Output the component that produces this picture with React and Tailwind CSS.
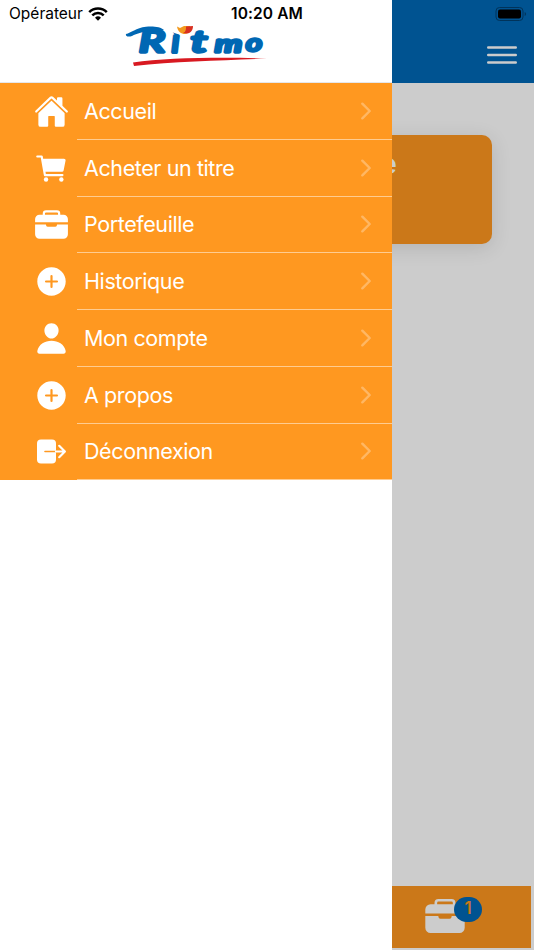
import {
  IoHome,
  IoCart,
  IoBriefcase,
  IoAddCircle,
  IoPerson,
  IoChevronForward,
} from "react-icons/io5";

function LogoutIcon({ className }) {
  return (
    <svg viewBox="0 0 35 35" className={className}>
      <rect x="3" y="5.500" width="19" height="24" rx="4" fill="#fff" />
      <path d="M11 17.500h11" stroke="#ff9820" strokeWidth="1.600" strokeLinecap="round" />
      <path
        d="M22 17.500h8.500M25.200 11.800l5.700 5.700-5.700 5.700"
        fill="none"
        stroke="#fff"
        strokeWidth="2.200"
        strokeLinecap="round"
        strokeLinejoin="round"
      />
    </svg>
  );
}

const menuItems = [
  { label: "Accueil", icon: IoHome },
  { label: "Acheter un titre", icon: IoCart },
  { label: "Portefeuille", icon: IoBriefcase },
  { label: "Historique", icon: IoAddCircle },
  { label: "Mon compte", icon: IoPerson },
  { label: "A propos", icon: IoAddCircle },
  { label: "Déconnexion", icon: LogoutIcon },
];

function Logo() {
  return (
    <svg width="160" height="66" viewBox="0 -18 160 66" className="block">
      <text
        fill="#0067b3"
        stroke="#0067b3"
        strokeWidth="3.400"
        strokeLinejoin="round"
        strokeLinecap="round"
        fontFamily="Lato, sans-serif"
        fontStyle="italic"
        fontWeight="400"
      >
        <tspan x="23" y="25.500" fontSize="30" textLength="26" lengthAdjust="spacingAndGlyphs">R</tspan>
        <tspan x="56" y="25.500" fontSize="31" strokeWidth="4.200">i</tspan>
        <tspan x="75" y="25.500" fontSize="29" textLength="16" lengthAdjust="spacingAndGlyphs">t</tspan>
        <tspan x="99" y="25.500" fontSize="24" textLength="27" lengthAdjust="spacingAndGlyphs">m</tspan>
        <tspan x="130" y="25" fontSize="24" textLength="16" lengthAdjust="spacingAndGlyphs">o</tspan>
      </text>
      <path d="M10 8C15 7 20 2 30 .8C37 0 45 1 48 4L42 6C32 4 22 7 16 10C12 11.500 9 10 10 8z" fill="#0067b3" />
      <path d="M54 0h24v6c-4 2-7 3-10 3-5 0-10-2-14-4z" fill="#fff" />
      <path d="M61 .5l3 1.500 4-2h6c0 5-2 8-5 8-4 0-7-2-8-7.500z" fill="#f39a1e" />
      <path d="M70 .5L77 0c0 4-2 7-6 7.500l-4-.5c3-1 3-4 3-6.500z" fill="#d83021" />
      <path d="M17 36.500C50 32 100 31 151 32.500C110 34.500 60 35 18 40z" fill="#d81921" />
    </svg>
  );
}

function Wifi() {
  return (
    <svg width="20" height="14" viewBox="0 0 20 14" className="block">
      <g fill="none" stroke="#000" strokeWidth="2.500">
        <path d="M1.200 5.100a12.500 12.500 0 0 1 17.600 0" />
        <path d="M4.300 8.300a8 8 0 0 1 11.400 0" />
      </g>
      <path d="M7 10.700a4.300 4.300 0 0 1 6 0L10 13.800z" />
    </svg>
  );
}

function StatusBar() {
  return (
    <div className="absolute inset-x-0 top-0 z-20 grid h-7 grid-cols-3 items-center text-[15.500px] leading-7 text-black">
      <div className="flex items-center gap-[5px] pl-[9px]">
        <span>Opérateur</span>
        <Wifi />
      </div>
      <span className="text-center font-semibold tracking-[0.100px]">10:20 AM</span>
      <div className="flex justify-end pr-[7px]">
        <svg width="32" height="15" viewBox="0 0 32 15">
          <rect x="1" y="0.500" width="27" height="13" rx="3.500" fill="none" stroke="#00335a" />
          <rect x="3" y="2.500" width="23" height="9" rx="2" />
          <path d="M29.700 5c1.800.6 1.800 3.400 0 4z" fill="#00335a" />
        </svg>
      </div>
    </div>
  );
}

function Drawer() {
  return (
    <aside className="absolute inset-y-0 left-0 z-10 w-[392px] overflow-hidden bg-white">
      <div className="flex h-[83px] justify-center border-b border-gray-200 pt-2">
        <Logo />
      </div>
      <nav className="bg-[#ff9820]">
        {menuItems.map(({ label, icon: Icon }) => (
          <a key={label} className="flex h-[56.750px] pl-[34px] text-white">
            <span className="flex w-[43px] items-center">
              <Icon className="size-[35px]" />
            </span>
            <span className="flex flex-1 items-center justify-between border-b border-white/50 pr-[13px] pl-[7px]">
              <span className="text-[21.500px] leading-7 tracking-[-0.400px]">{label}</span>
              <IoChevronForward className="size-[26px] opacity-30" />
            </span>
          </a>
        ))}
      </nav>
    </aside>
  );
}

export default function App() {
  return (
    <div className="relative flex h-[950px] w-[534px] flex-col overflow-hidden bg-[#cccccc] font-[Inter,sans-serif]">
      <StatusBar />
      <Drawer />

      <header className="flex h-[82.500px] shrink-0 justify-end bg-[#005391] pt-[46px] pr-[17px]">
        <svg width="30" height="18" viewBox="0 0 30 18" stroke="#ccc" strokeWidth="2.400" strokeLinecap="round">
          <path d="M1.200 1.500h27.600M1.200 9h27.600M1.200 16.500h27.600" />
        </svg>
      </header>

      <main className="flex-1 px-[42px] pt-[52px]">
        <div className="h-[109.500px] rounded-[10px] bg-[#cb7819] pt-[12px] pr-[95px] text-right text-[29px] leading-[34px] font-semibold text-[#ccc] shadow-[0_4px_20px_rgba(0,0,0,0.120)]">
          e
        </div>
      </main>

      <footer className="mr-[3px] mb-[2.500px] flex h-[62px] shrink-0 justify-end bg-[#cb7819] pt-[9px] pr-[65px]">
        <div className="relative">
          <IoBriefcase className="size-[42px] text-[#ccc]" />
          <span className="absolute top-[2px] left-[30px] flex h-[25px] w-7 items-center justify-center rounded-full bg-[#005391] text-[17px] font-semibold text-[#cb7819]">
            1
          </span>
        </div>
      </footer>
    </div>
  );
}
